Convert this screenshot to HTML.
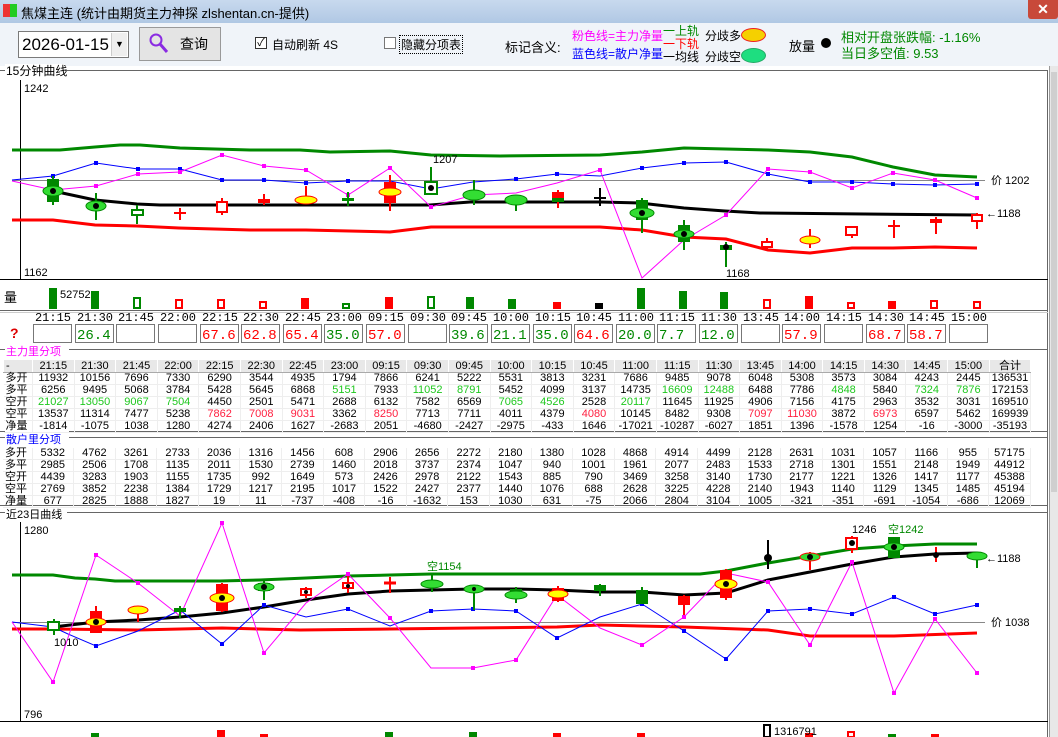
<!DOCTYPE html><html><head><meta charset="utf-8"><style>
*{margin:0;padding:0;box-sizing:border-box}
body{width:1058px;height:737px;overflow:hidden;background:#f0f4f9;font-family:"Liberation Sans","Noto Sans CJK SC",sans-serif;position:relative;font-size:12px}
.a{position:absolute;white-space:nowrap}
.t{font-family:"Liberation Sans","Noto Sans CJK SC",sans-serif;font-size:11px;fill:#000}
table{border-collapse:collapse;position:absolute;left:3px;font-size:11px;font-family:"Liberation Sans","Noto Sans CJK SC",sans-serif}
td{width:41.6px;height:11px;line-height:11px;text-align:center;padding:0;border-right:1px solid #eee;border-bottom:1px solid #eee}
td:first-child{width:29px;text-align:left;padding-left:2px}
.g{color:#1ec81e}.r{color:#ff2040}
.hd td{background:#e8e8e8;border:1px solid #fff;border-bottom:1px solid #aaa;height:13px}
</style></head><body>
<div class="a" style="left:0;top:0;width:1058px;height:23px;background:linear-gradient(#c8d9ee,#b0c8e4)"></div>
<div class="a" style="left:3px;top:4px;width:14px;height:13px;background:linear-gradient(90deg,#e33 50%,#2c2 50%)"></div>
<div class="a" style="left:21px;top:3px;font-size:13px">焦煤主连 (统计由期货主力神探 zlshentan.cn-提供)</div>
<div class="a" style="left:1028px;top:0;width:30px;height:19px;background:#c8493a;border-radius:0 0 3px 3px;color:#fff;font-weight:bold;text-align:center;font-size:14px;line-height:18px">✕</div>
<!-- toolbar -->
<div class="a" style="left:18px;top:31px;width:111px;height:27px;background:#fff;border:1px solid #7a7a7a;font-size:17px;line-height:25px;padding-left:3px">2026-01-15</div>
<div class="a" style="left:111px;top:33px;width:16px;height:23px;background:#eee;border-left:1px solid #ccc;font-size:9px;text-align:center;line-height:23px">▼</div>
<div class="a" style="left:139px;top:27px;width:82px;height:34px;background:#e4e4e4;border:1px solid #999;font-size:14px;line-height:32px;padding-left:40px">查询</div>
<svg class="a" style="left:148px;top:32px" width="22" height="24"><circle cx="8" cy="8" r="5.5" fill="none" stroke="#8a2be2" stroke-width="2"/><line x1="12" y1="12" x2="19" y2="20" stroke="#8a2be2" stroke-width="3"/></svg>
<div class="a" style="left:255px;top:37px;width:12px;height:12px;border:1px solid #333;background:#fff;font-size:11px;line-height:10px;text-align:center">✓</div>
<div class="a" style="left:272px;top:36px;font-size:12px">自动刷新 4S</div>
<div class="a" style="left:384px;top:37px;width:12px;height:12px;border:1px solid #777;background:#fff"></div>
<div class="a" style="left:399px;top:35px;font-size:12px;border:1px dotted #000;padding:0 1px">隐藏分项表</div>
<div class="a" style="left:505px;top:37px;font-size:13px">标记含义:</div>
<div class="a" style="left:572px;top:27px;font-size:12px;color:#f0f">粉色线=主力净量</div>
<div class="a" style="left:572px;top:45px;font-size:12px;color:#00f">蓝色线=散户净量</div>
<div class="a" style="left:663px;top:22px;font-size:12px;color:#080">一上轨</div>
<div class="a" style="left:663px;top:35px;font-size:12px;color:#f00">一下轨</div>
<div class="a" style="left:663px;top:48px;font-size:12px">一均线</div>
<div class="a" style="left:705px;top:27px;font-size:12px">分歧多</div>
<div class="a" style="left:705px;top:48px;font-size:12px">分歧空</div>
<div class="a" style="left:741px;top:28px;width:25px;height:14px;border-radius:50%;background:#f5d000;border:1px solid #e22"></div>
<div class="a" style="left:741px;top:48px;width:25px;height:15px;border-radius:50%;background:#1ede80;border:1px solid #2a6"></div>
<div class="a" style="left:789px;top:36px;font-size:13px">放量</div>
<div class="a" style="left:821px;top:38px;width:10px;height:10px;border-radius:50%;background:#000"></div>
<div class="a" style="left:841px;top:27px;font-size:13px;color:#080">相对开盘张跌幅: -1.16%</div>
<div class="a" style="left:841px;top:43px;font-size:13px;color:#080">当日多空值: 9.53</div>
<!-- main white area -->
<div class="a" style="left:0;top:66px;width:1049px;height:671px;background:#fff"></div>
<div class="a" style="left:1049px;top:66px;width:9px;height:671px;background:#e8e8e8;border-left:1px solid #999"></div>
<div class="a" style="left:1051px;top:72px;width:6px;height:420px;background:#cfcfcf"></div>
<svg class="a" style="left:0;top:0" width="1049" height="737">
<g fill="none" stroke-width="1">
<line x1="0" y1="70.5" x2="1048" y2="70.5" stroke="#666"/>
<line x1="1047.5" y1="70" x2="1047.5" y2="737" stroke="#666"/>
<line x1="20.5" y1="80" x2="20.5" y2="279" stroke="#000"/>
<line x1="0" y1="279.5" x2="1048" y2="279.5" stroke="#000"/>
<line x1="0" y1="310.5" x2="1048" y2="310.5" stroke="#666"/><line x1="0" y1="312.5" x2="1048" y2="312.5" stroke="#ccc"/>
<line x1="0" y1="349.5" x2="1048" y2="349.5" stroke="#666"/>
<line x1="0" y1="431.5" x2="1048" y2="431.5" stroke="#666"/>
<line x1="0" y1="437.5" x2="1048" y2="437.5" stroke="#666"/>
<line x1="0" y1="505.5" x2="1048" y2="505.5" stroke="#666"/>
<line x1="0" y1="512.5" x2="1048" y2="512.5" stroke="#666"/>
<line x1="20.5" y1="522" x2="20.5" y2="721" stroke="#000"/>
<line x1="0" y1="721.5" x2="1048" y2="721.5" stroke="#000"/>
<!-- top chart -->
<line x1="12" y1="180.5" x2="985" y2="180.5" stroke="#888"/>
<polyline stroke="#080" stroke-width="3" points="12,150 60,150 95,147 120,145 140,145 180,148 250,150 300,150 330,152 390,151 431,155 500,156 600,155 642,152 684,148 726,149 768,150 810,152 852,157 893,167 935,175 977,177"/>
<polyline stroke="#f00" stroke-width="3" points="12,220 53,220 95,225 137,226 179,228 250,230 306,230 390,232 431,227 600,227 642,230 684,237 726,239 768,250 810,253 852,248 893,248 935,247 977,248"/>
<polyline stroke="#000" stroke-width="3" points="53,191 95,200 137,204 160,205 430,205 470,202 600,202 640,203 684,208 725,211 760,213 977,215"/>
<polyline stroke="#00f" points="12,180 53,176 96,163 138,169 180,169 222,180 264,180 306,183 348,181 390,181 431,189 473,182 516,179 557,174 600,176 642,168 684,163 726,162 768,174 810,182 852,182 893,184 935,185 977,184"/>
<polyline stroke="#f0f" points="12,181 53,190 96,186 138,174 180,172 222,155 264,166 306,170 348,195 390,168 431,207 473,195 516,193 557,183 600,170 642,278 684,240 726,215 768,169 810,172 852,188 893,173 935,180 977,198"/>
<!-- bottom chart -->
<line x1="12" y1="622.5" x2="985" y2="622.5" stroke="#888"/>
<polyline stroke="#080" stroke-width="3" points="12,575 53,575 75,578 95,579 115,581 220,581 260,580 306,578 348,576 390,575 431,574 700,574 726,571 768,563 810,556 852,549 894,546 935,544 977,544"/>
<polyline stroke="#f00" stroke-width="3" points="12,629 53,629 138,630 222,628 300,630 390,629 473,628 557,627 600,625 684,627 768,630 810,636 894,636 977,633"/>
<polyline stroke="#000" stroke-width="3" points="53,627 96,622 138,620 180,617 222,613 264,607 306,600 348,594 390,591 431,590 473,589 516,589 557,590 600,592 642,592 684,595 726,593 768,580 810,572 852,564 894,557 935,554 977,553"/>
<polyline stroke="#00f" points="12,622 53,627 68,634 96,646 138,631 180,610 222,644 264,605 306,617 348,609 390,626 431,611 473,609 516,611 557,638 600,617 642,604 684,631 726,659 768,611 810,609 852,614 894,597 935,614 977,605"/>
<polyline stroke="#f0f" points="12,622 53,682 96,555 138,583 180,616 222,523 264,653 306,603 348,574 390,618 431,668 473,668 516,660 557,595 600,628 642,645 684,617 726,573 768,582 810,645 852,562 894,693 935,619 977,673"/>
</g>
<!-- markers -->
<g fill="#00f"><rect x="51" y="174" width="4" height="4"/><rect x="94" y="161" width="4" height="4"/><rect x="136" y="167" width="4" height="4"/><rect x="178" y="167" width="4" height="4"/><rect x="220" y="178" width="4" height="4"/><rect x="262" y="178" width="4" height="4"/><rect x="304" y="181" width="4" height="4"/><rect x="346" y="179" width="4" height="4"/><rect x="429" y="187" width="4" height="4"/><rect x="514" y="177" width="4" height="4"/><rect x="555" y="172" width="4" height="4"/><rect x="640" y="166" width="4" height="4"/><rect x="682" y="161" width="4" height="4"/><rect x="724" y="160" width="4" height="4"/><rect x="766" y="172" width="4" height="4"/><rect x="808" y="180" width="4" height="4"/><rect x="850" y="180" width="4" height="4"/><rect x="891" y="182" width="4" height="4"/><rect x="933" y="183" width="4" height="4"/><rect x="975" y="182" width="4" height="4"/>
<rect x="94" y="644" width="4" height="4"/><rect x="220" y="642" width="4" height="4"/><rect x="262" y="603" width="4" height="4"/><rect x="346" y="607" width="4" height="4"/><rect x="429" y="609" width="4" height="4"/><rect x="471" y="607" width="4" height="4"/><rect x="514" y="609" width="4" height="4"/><rect x="555" y="636" width="4" height="4"/><rect x="640" y="602" width="4" height="4"/><rect x="682" y="629" width="4" height="4"/><rect x="724" y="657" width="4" height="4"/><rect x="766" y="609" width="4" height="4"/><rect x="808" y="607" width="4" height="4"/><rect x="850" y="612" width="4" height="4"/><rect x="892" y="595" width="4" height="4"/><rect x="933" y="612" width="4" height="4"/><rect x="975" y="603" width="4" height="4"/></g>
<g fill="#f0f"><rect x="94" y="184" width="4" height="4"/><rect x="136" y="172" width="4" height="4"/><rect x="178" y="170" width="4" height="4"/><rect x="220" y="153" width="4" height="4"/><rect x="262" y="164" width="4" height="4"/><rect x="304" y="168" width="4" height="4"/><rect x="346" y="193" width="4" height="4"/><rect x="388" y="166" width="4" height="4"/><rect x="429" y="205" width="4" height="4"/><rect x="598" y="168" width="4" height="4"/><rect x="724" y="213" width="4" height="4"/><rect x="766" y="167" width="4" height="4"/><rect x="808" y="170" width="4" height="4"/><rect x="850" y="186" width="4" height="4"/><rect x="891" y="171" width="4" height="4"/><rect x="933" y="178" width="4" height="4"/><rect x="975" y="196" width="4" height="4"/>
<rect x="51" y="680" width="4" height="4"/><rect x="94" y="553" width="4" height="4"/><rect x="136" y="581" width="4" height="4"/><rect x="220" y="521" width="4" height="4"/><rect x="262" y="651" width="4" height="4"/><rect x="346" y="572" width="4" height="4"/><rect x="388" y="616" width="4" height="4"/><rect x="471" y="666" width="4" height="4"/><rect x="514" y="658" width="4" height="4"/><rect x="640" y="643" width="4" height="4"/><rect x="682" y="615" width="4" height="4"/><rect x="766" y="580" width="4" height="4"/><rect x="808" y="643" width="4" height="4"/><rect x="850" y="560" width="4" height="4"/><rect x="892" y="691" width="4" height="4"/><rect x="933" y="617" width="4" height="4"/><rect x="975" y="671" width="4" height="4"/></g>
<!-- top candles -->
<g stroke-width="2">
<line x1="53" y1="176" x2="53" y2="205" stroke="#080"/><rect x="47" y="179" width="12" height="23" fill="#080"/><ellipse cx="53" cy="191" rx="10" ry="5" fill="#3d3" stroke="#080" stroke-width="1"/><circle cx="53" cy="191" r="3" fill="#000"/>
<line x1="96" y1="193" x2="96" y2="220" stroke="#080"/><ellipse cx="96" cy="206" rx="10" ry="5" fill="#3d3" stroke="#080" stroke-width="1"/><circle cx="96" cy="206" r="3" fill="#000"/>
<line x1="137" y1="205" x2="137" y2="224" stroke="#080"/><rect x="132" y="210" width="11" height="5" fill="#fff" stroke="#080"/>
<line x1="180" y1="208" x2="180" y2="220" stroke="#f00"/><line x1="174" y1="213" x2="186" y2="213" stroke="#f00"/>
<line x1="222" y1="198" x2="222" y2="215" stroke="#f00"/><rect x="217" y="202" width="10" height="10" fill="#fff" stroke="#f00"/>
<line x1="264" y1="194" x2="264" y2="205" stroke="#f00"/><rect x="258" y="199" width="12" height="4" fill="#f00"/>
<line x1="306" y1="186" x2="306" y2="204" stroke="#f00"/><ellipse cx="306" cy="200" rx="11" ry="4" fill="#ff0" stroke="#f00" stroke-width="1"/>
<line x1="348" y1="192" x2="348" y2="206" stroke="#080"/><rect x="342" y="198" width="12" height="3" fill="#080"/>
<line x1="390" y1="175" x2="390" y2="211" stroke="#f00"/><rect x="384" y="182" width="12" height="21" fill="#f00"/><ellipse cx="390" cy="192" rx="11" ry="4" fill="#ff0" stroke="#f00" stroke-width="1"/>
<line x1="431" y1="167" x2="431" y2="195" stroke="#080"/><rect x="425" y="182" width="12" height="12" fill="#fff" stroke="#080"/><circle cx="431" cy="188" r="3" fill="#000"/>
<line x1="474" y1="180" x2="474" y2="205" stroke="#080"/><ellipse cx="474" cy="195" rx="11" ry="5" fill="#3d3" stroke="#080" stroke-width="1"/>
<line x1="516" y1="195" x2="516" y2="211" stroke="#080"/><ellipse cx="516" cy="200" rx="11" ry="5" fill="#3d3" stroke="#080" stroke-width="1"/>
<line x1="558" y1="190" x2="558" y2="208" stroke="#f00"/><rect x="552" y="192" width="12" height="9" fill="#f00"/><rect x="552" y="198" width="12" height="4" fill="#080"/>
<line x1="600" y1="188" x2="600" y2="206" stroke="#000"/><line x1="594" y1="198" x2="606" y2="198" stroke="#000"/>
<line x1="642" y1="198" x2="642" y2="233" stroke="#080"/><rect x="636" y="200" width="12" height="20" fill="#080"/><ellipse cx="642" cy="213" rx="12" ry="5" fill="#3d3" stroke="#080" stroke-width="1"/><circle cx="642" cy="213" r="3" fill="#000"/>
<line x1="684" y1="220" x2="684" y2="250" stroke="#080"/><rect x="678" y="225" width="12" height="17" fill="#080"/><ellipse cx="684" cy="234" rx="10" ry="4" fill="#3d3" stroke="#080" stroke-width="1"/><circle cx="684" cy="234" r="3" fill="#000"/>
<line x1="726" y1="242" x2="726" y2="267" stroke="#080"/><rect x="720" y="245" width="12" height="5" fill="#080"/><circle cx="726" cy="247" r="3" fill="#000"/>
<line x1="767" y1="238" x2="767" y2="250" stroke="#f00"/><rect x="762" y="242" width="10" height="5" fill="#fff" stroke="#f00"/>
<line x1="810" y1="229" x2="810" y2="248" stroke="#f00"/><ellipse cx="810" cy="240" rx="10" ry="4" fill="#ff0" stroke="#f00" stroke-width="1"/>
<line x1="852" y1="226" x2="852" y2="238" stroke="#f00"/><rect x="846" y="227" width="11" height="8" fill="#fff" stroke="#f00"/>
<line x1="894" y1="220" x2="894" y2="238" stroke="#f00"/><line x1="888" y1="226" x2="900" y2="226" stroke="#f00"/>
<line x1="936" y1="217" x2="936" y2="234" stroke="#f00"/><rect x="930" y="219" width="12" height="4" fill="#f00"/>
<line x1="977" y1="213" x2="977" y2="229" stroke="#f00"/><rect x="972" y="215" width="10" height="6" fill="#fff" stroke="#f00"/>
</g>
<!-- bottom candles -->
<g stroke-width="2">
<line x1="54" y1="619" x2="54" y2="635" stroke="#080"/><rect x="48" y="622" width="11" height="8" fill="#fff" stroke="#080"/>
<line x1="96" y1="606" x2="96" y2="633" stroke="#f00"/><rect x="90" y="611" width="12" height="22" fill="#f00"/><ellipse cx="96" cy="622" rx="10" ry="4" fill="#ff0" stroke="#f00" stroke-width="1"/><circle cx="96" cy="622" r="3" fill="#000"/>
<line x1="138" y1="608" x2="138" y2="622" stroke="#f00"/><ellipse cx="138" cy="610" rx="10" ry="4" fill="#ff0" stroke="#f00" stroke-width="1"/>
<line x1="180" y1="606" x2="180" y2="618" stroke="#080"/><rect x="174" y="608" width="12" height="4" fill="#080"/>
<line x1="222" y1="583" x2="222" y2="612" stroke="#f00"/><rect x="216" y="584" width="12" height="27" fill="#f00"/><ellipse cx="222" cy="598" rx="12" ry="5" fill="#ff0" stroke="#f00" stroke-width="1"/><circle cx="222" cy="598" r="3" fill="#000"/>
<line x1="264" y1="581" x2="264" y2="600" stroke="#080"/><rect x="258" y="583" width="12" height="8" fill="#080"/><ellipse cx="264" cy="587" rx="10" ry="4" fill="#3d3" stroke="#080" stroke-width="1"/><circle cx="264" cy="587" r="3" fill="#000"/>
<line x1="306" y1="587" x2="306" y2="598" stroke="#f00"/><rect x="301" y="589" width="10" height="6" fill="#fff" stroke="#f00"/><circle cx="306" cy="592" r="2" fill="#000"/>
<line x1="348" y1="576" x2="348" y2="593" stroke="#f00"/><rect x="343" y="583" width="10" height="5" fill="#fff" stroke="#f00"/><circle cx="348" cy="586" r="2" fill="#000"/>
<line x1="390" y1="577" x2="390" y2="593" stroke="#f00"/><line x1="384" y1="583" x2="396" y2="583" stroke="#f00" stroke-width="3"/>
<line x1="432" y1="574" x2="432" y2="592" stroke="#080"/><ellipse cx="432" cy="584" rx="11" ry="4" fill="#3d3" stroke="#080" stroke-width="1"/>
<line x1="474" y1="585" x2="474" y2="610" stroke="#080"/><ellipse cx="474" cy="589" rx="10" ry="4" fill="#3d3" stroke="#080" stroke-width="1"/><circle cx="474" cy="589" r="2" fill="#000"/>
<line x1="516" y1="587" x2="516" y2="603" stroke="#080"/><rect x="510" y="589" width="12" height="6" fill="#080"/><ellipse cx="516" cy="595" rx="11" ry="4" fill="#3d3" stroke="#080" stroke-width="1"/>
<line x1="558" y1="586" x2="558" y2="602" stroke="#f00"/><rect x="552" y="588" width="12" height="13" fill="#f00"/><ellipse cx="558" cy="594" rx="10" ry="4" fill="#ff0" stroke="#f00" stroke-width="1"/>
<line x1="600" y1="584" x2="600" y2="596" stroke="#080"/><rect x="594" y="585" width="12" height="6" fill="#080"/>
<line x1="642" y1="587" x2="642" y2="604" stroke="#080"/><rect x="636" y="590" width="12" height="14" fill="#080"/>
<line x1="684" y1="595" x2="684" y2="615" stroke="#f00"/><rect x="678" y="596" width="12" height="9" fill="#f00"/>
<line x1="726" y1="569" x2="726" y2="600" stroke="#f00"/><rect x="720" y="570" width="12" height="28" fill="#f00"/><ellipse cx="726" cy="584" rx="11" ry="5" fill="#ff0" stroke="#f00" stroke-width="1"/><circle cx="726" cy="584" r="3" fill="#000"/>
<line x1="768" y1="540" x2="768" y2="569" stroke="#000"/><circle cx="768" cy="558" r="4" fill="#000"/>
<line x1="810" y1="552" x2="810" y2="570" stroke="#f00"/><ellipse cx="810" cy="557" rx="10" ry="4" fill="#3d3" stroke="#f00" stroke-width="1"/><circle cx="810" cy="557" r="3" fill="#000"/>
<line x1="852" y1="536" x2="852" y2="553" stroke="#f00"/><rect x="846" y="538" width="11" height="11" fill="#fff" stroke="#f00"/><circle cx="852" cy="543" r="3" fill="#000"/>
<line x1="894" y1="537" x2="894" y2="558" stroke="#080"/><rect x="888" y="537" width="12" height="21" fill="#080"/><ellipse cx="894" cy="547" rx="10" ry="4" fill="#3d3" stroke="#080" stroke-width="1"/><circle cx="894" cy="547" r="3" fill="#000"/>
<line x1="936" y1="547" x2="936" y2="562" stroke="#f00"/><circle cx="936" cy="555" r="3" fill="#000"/>
<line x1="977" y1="553" x2="977" y2="568" stroke="#080"/><ellipse cx="977" cy="556" rx="10" ry="4" fill="#3d3" stroke="#080" stroke-width="1"/>
</g>
<!-- volume -->
<g stroke-width="2">
<rect x="49" y="288" width="8" height="21" fill="#080"/><rect x="91" y="291" width="8" height="18" fill="#080"/>
<rect x="134" y="298" width="6" height="10" fill="none" stroke="#080"/><rect x="176" y="300" width="6" height="8" fill="none" stroke="#f00"/>
<rect x="218" y="300" width="6" height="8" fill="none" stroke="#f00"/><rect x="260" y="302" width="6" height="6" fill="none" stroke="#f00"/>
<rect x="301" y="298" width="8" height="11" fill="#f00"/><rect x="343" y="304" width="6" height="4" fill="none" stroke="#080"/>
<rect x="385" y="297" width="8" height="12" fill="#f00"/><rect x="428" y="297" width="6" height="11" fill="none" stroke="#080"/>
<rect x="466" y="297" width="8" height="12" fill="#080"/><rect x="508" y="299" width="8" height="10" fill="#080"/>
<rect x="553" y="302" width="8" height="7" fill="#f00"/><rect x="595" y="303" width="8" height="6" fill="#000"/>
<rect x="637" y="288" width="8" height="21" fill="#080"/><rect x="679" y="291" width="8" height="18" fill="#080"/>
<rect x="720" y="292" width="8" height="17" fill="#080"/><rect x="764" y="300" width="6" height="8" fill="none" stroke="#f00"/>
<rect x="805" y="296" width="8" height="13" fill="#f00"/><rect x="848" y="303" width="6" height="5" fill="none" stroke="#f00"/>
<rect x="888" y="301" width="8" height="8" fill="#f00"/><rect x="931" y="301" width="6" height="7" fill="none" stroke="#f00"/>
<rect x="974" y="302" width="6" height="6" fill="none" stroke="#f00"/>
<rect x="91" y="733" width="8" height="4" fill="#080"/><rect x="217" y="730" width="8" height="7" fill="#f00"/><rect x="260" y="734" width="8" height="3" fill="#f00"/><rect x="385" y="732" width="8" height="5" fill="#080"/><rect x="469" y="732" width="8" height="5" fill="#080"/><rect x="553" y="733" width="8" height="4" fill="#f00"/><rect x="637" y="733" width="8" height="4" fill="#f00"/><rect x="764" y="725" width="6" height="12" fill="none" stroke="#000"/><rect x="805" y="733" width="8" height="4" fill="#f00"/><rect x="848" y="732" width="6" height="5" fill="none" stroke="#f00"/><rect x="888" y="734" width="8" height="3" fill="#080"/><rect x="931" y="734" width="8" height="3" fill="#f00"/>
</g>
<!-- texts -->
<g class="t" font-size="12">
<rect x="5" y="64" width="60" height="13" fill="#fff"/><text x="6" y="75" fill="#000" font-size="12">15分钟曲线</text>
<text x="24" y="92">1242</text><text x="24" y="276">1162</text>
<text x="433" y="163">1207</text><text x="726" y="277">1168</text>
<text x="991" y="184">价 1202</text><text x="986" y="217">←1188</text>
<text x="4" y="302" font-size="13">量</text><text x="60" y="298">52752</text>
<rect x="5" y="507" width="62" height="13" fill="#fff"/><text x="6" y="518">近23日曲线</text>
<text x="24" y="534">1280</text><text x="24" y="718">796</text>
<text x="54" y="646">1010</text><text x="427" y="570" fill="#080">空1154</text>
<text x="852" y="533">1246</text><text x="888" y="533" fill="#080">空1242</text>
<text x="991" y="626">价 1038</text><text x="986" y="562">←1188</text>
<text x="774" y="735">1316791</text>
<rect x="5" y="343" width="64" height="13" fill="#fff"/><text x="6" y="355" fill="#f0f">主力里分项</text>
<rect x="5" y="431" width="64" height="13" fill="#fff"/><text x="6" y="443" fill="#00f">散户里分项</text>
<text x="10" y="338" fill="#d00" font-size="14" font-weight="bold">?</text>
</g>
<g font-family="Liberation Mono,monospace" font-size="12" text-anchor="middle">
<text x="53" y="321">21:15</text><text x="95" y="321">21:30</text><text x="136" y="321">21:45</text><text x="178" y="321">22:00</text><text x="220" y="321">22:15</text><text x="261" y="321">22:30</text><text x="303" y="321">22:45</text><text x="344" y="321">23:00</text><text x="386" y="321">09:15</text><text x="428" y="321">09:30</text><text x="469" y="321">09:45</text><text x="511" y="321">10:00</text><text x="553" y="321">10:15</text><text x="594" y="321">10:45</text><text x="636" y="321">11:00</text><text x="677" y="321">11:15</text><text x="719" y="321">11:30</text><text x="761" y="321">13:45</text><text x="802" y="321">14:00</text><text x="844" y="321">14:15</text><text x="886" y="321">14:30</text><text x="927" y="321">14:45</text><text x="969" y="321">15:00</text>
</g>
<g fill="#fff" stroke="#777">
<rect x="33.5" y="324.5" width="38" height="18"/><rect x="75.5" y="324.5" width="38" height="18"/><rect x="116.5" y="324.5" width="38" height="18"/><rect x="158.5" y="324.5" width="38" height="18"/><rect x="200.5" y="324.5" width="38" height="18"/><rect x="241.5" y="324.5" width="38" height="18"/><rect x="283.5" y="324.5" width="38" height="18"/><rect x="324.5" y="324.5" width="38" height="18"/><rect x="366.5" y="324.5" width="38" height="18"/><rect x="408.5" y="324.5" width="38" height="18"/><rect x="449.5" y="324.5" width="38" height="18"/><rect x="491.5" y="324.5" width="38" height="18"/><rect x="533.5" y="324.5" width="38" height="18"/><rect x="574.5" y="324.5" width="38" height="18"/><rect x="616.5" y="324.5" width="38" height="18"/><rect x="657.5" y="324.5" width="38" height="18"/><rect x="699.5" y="324.5" width="38" height="18"/><rect x="741.5" y="324.5" width="38" height="18"/><rect x="782.5" y="324.5" width="38" height="18"/><rect x="824.5" y="324.5" width="38" height="18"/><rect x="866.5" y="324.5" width="38" height="18"/><rect x="907.5" y="324.5" width="38" height="18"/><rect x="949.5" y="324.5" width="38" height="18"/>
</g>
<g font-family="Liberation Mono,monospace" font-size="14">
<text x="77" y="339" fill="#080">26.4</text><text x="202" y="339" fill="#f00">67.6</text><text x="243" y="339" fill="#f00">62.8</text><text x="285" y="339" fill="#f00">65.4</text><text x="326" y="339" fill="#080">35.0</text><text x="368" y="339" fill="#f00">57.0</text><text x="451" y="339" fill="#080">39.6</text><text x="493" y="339" fill="#080">21.1</text><text x="535" y="339" fill="#080">35.0</text><text x="576" y="339" fill="#f00">64.6</text><text x="618" y="339" fill="#080">20.0</text><text x="659" y="339" fill="#080">7.7</text><text x="701" y="339" fill="#080">12.0</text><text x="784" y="339" fill="#f00">57.9</text><text x="868" y="339" fill="#f00">68.7</text><text x="909" y="339" fill="#f00">58.7</text>
</g>
</svg>
<table style="top:359px">
<tr class="hd"><td>-</td><td>21:15</td><td>21:30</td><td>21:45</td><td>22:00</td><td>22:15</td><td>22:30</td><td>22:45</td><td>23:00</td><td>09:15</td><td>09:30</td><td>09:45</td><td>10:00</td><td>10:15</td><td>10:45</td><td>11:00</td><td>11:15</td><td>11:30</td><td>13:45</td><td>14:00</td><td>14:15</td><td>14:30</td><td>14:45</td><td>15:00</td><td>合计</td></tr>
<tr><td>多开</td><td>11932</td><td>10156</td><td>7696</td><td>7330</td><td>6290</td><td>3544</td><td>4935</td><td>1794</td><td>7866</td><td>6241</td><td>5222</td><td>5531</td><td>3813</td><td>3231</td><td>7686</td><td>9485</td><td>9078</td><td>6048</td><td>5308</td><td>3573</td><td>3084</td><td>4243</td><td>2445</td><td>136531</td></tr>
<tr><td>多平</td><td>6256</td><td>9495</td><td>5068</td><td>3784</td><td>5428</td><td>5645</td><td>6868</td><td class="g">5151</td><td>7933</td><td class="g">11052</td><td class="g">8791</td><td>5452</td><td>4099</td><td>3137</td><td>14735</td><td class="g">16609</td><td class="g">12488</td><td>6488</td><td>7786</td><td class="g">4848</td><td>5840</td><td class="g">7324</td><td class="g">7876</td><td>172153</td></tr>
<tr><td>空开</td><td class="g">21027</td><td class="g">13050</td><td class="g">9067</td><td class="g">7504</td><td>4450</td><td>2501</td><td>5471</td><td>2688</td><td>6132</td><td>7582</td><td>6569</td><td class="g">7065</td><td class="g">4526</td><td>2528</td><td class="g">20117</td><td>11645</td><td>11925</td><td>4906</td><td>7156</td><td>4175</td><td>2963</td><td>3532</td><td>3031</td><td>169510</td></tr>
<tr><td>空平</td><td>13537</td><td>11314</td><td>7477</td><td>5238</td><td class="r">7862</td><td class="r">7008</td><td class="r">9031</td><td>3362</td><td class="r">8250</td><td>7713</td><td>7711</td><td>4011</td><td>4379</td><td class="r">4080</td><td>10145</td><td>8482</td><td>9308</td><td class="r">7097</td><td class="r">11030</td><td>3872</td><td class="r">6973</td><td>6597</td><td>5462</td><td>169939</td></tr>
<tr><td>净量</td><td>-1814</td><td>-1075</td><td>1038</td><td>1280</td><td>4274</td><td>2406</td><td>1627</td><td>-2683</td><td>2051</td><td>-4680</td><td>-2427</td><td>-2975</td><td>-433</td><td>1646</td><td>-17021</td><td>-10287</td><td>-6027</td><td>1851</td><td>1396</td><td>-1578</td><td>1254</td><td>-16</td><td>-3000</td><td>-35193</td></tr>
</table>
<table style="top:448px">
<tr><td>多开</td><td>5332</td><td>4762</td><td>3261</td><td>2733</td><td>2036</td><td>1316</td><td>1456</td><td>608</td><td>2906</td><td>2656</td><td>2272</td><td>2180</td><td>1380</td><td>1028</td><td>4868</td><td>4914</td><td>4499</td><td>2128</td><td>2631</td><td>1031</td><td>1057</td><td>1166</td><td>955</td><td>57175</td></tr>
<tr><td>多平</td><td>2985</td><td>2506</td><td>1708</td><td>1135</td><td>2011</td><td>1530</td><td>2739</td><td>1460</td><td>2018</td><td>3737</td><td>2374</td><td>1047</td><td>940</td><td>1001</td><td>1961</td><td>2077</td><td>2483</td><td>1533</td><td>2718</td><td>1301</td><td>1551</td><td>2148</td><td>1949</td><td>44912</td></tr>
<tr><td>空开</td><td>4439</td><td>3283</td><td>1903</td><td>1155</td><td>1735</td><td>992</td><td>1649</td><td>573</td><td>2426</td><td>2978</td><td>2122</td><td>1543</td><td>885</td><td>790</td><td>3469</td><td>3258</td><td>3140</td><td>1730</td><td>2177</td><td>1221</td><td>1326</td><td>1417</td><td>1177</td><td>45388</td></tr>
<tr><td>空平</td><td>2769</td><td>3852</td><td>2238</td><td>1384</td><td>1729</td><td>1217</td><td>2195</td><td>1017</td><td>1522</td><td>2427</td><td>2377</td><td>1440</td><td>1076</td><td>688</td><td>2628</td><td>3225</td><td>4228</td><td>2140</td><td>1943</td><td>1140</td><td>1129</td><td>1345</td><td>1485</td><td>45194</td></tr>
<tr><td>净量</td><td>677</td><td>2825</td><td>1888</td><td>1827</td><td>19</td><td>11</td><td>-737</td><td>-408</td><td>-16</td><td>-1632</td><td>153</td><td>1030</td><td>631</td><td>-75</td><td>2066</td><td>2804</td><td>3104</td><td>1005</td><td>-321</td><td>-351</td><td>-691</td><td>-1054</td><td>-686</td><td>12069</td></tr>
</table>
</body></html>
